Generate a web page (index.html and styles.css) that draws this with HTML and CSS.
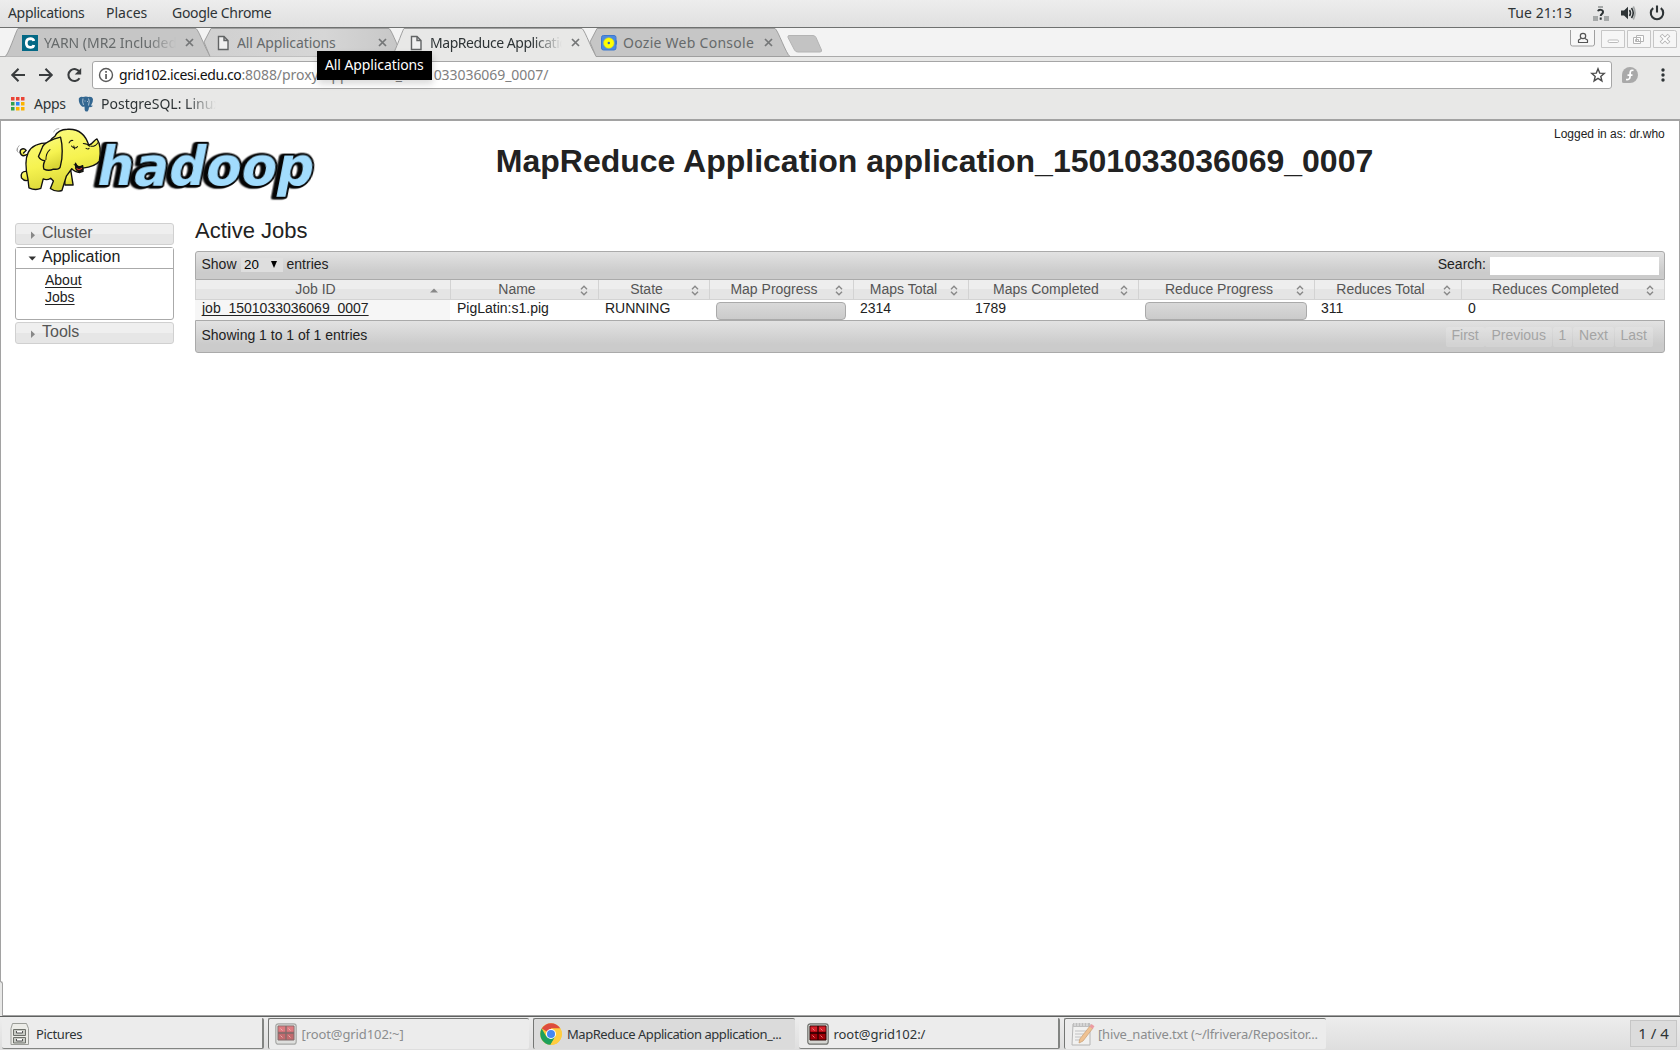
FILE: index.html
```html
<!DOCTYPE html>
<html lang="en">
<head>
<meta charset="utf-8">
<title>MapReduce Application application_1501033036069_0007</title>
<link rel="stylesheet" href="styles.css">
</head>
<body>
<header class="panel">
  <span class="menu menu-apps">Applications</span>
  <span class="menu menu-places">Places</span>
  <span class="menu menu-chrome">Google Chrome</span>
  <span class="clock">Tue 21:13</span>
  <svg class="tray" width="76" height="20" viewBox="0 0 76 20">
    <path d="M1 13h5v5H1zM12 13h5v5h-5zM6 3h5v2H6z" fill="#a5a8a8"/>
    <path d="M6 8.2C6.6 6.300 11 6.300 11 9c0 2-2.300 2-2.300 4M8.700 14.500v2.300" fill="none" stroke="#2e3436" stroke-width="2"/>
    <path d="M29 7.500h3l4-3.800v12.600l-4-3.800h-3z" fill="#2e3436"/>
    <path d="M37.500 7q2 3 0 6M39.500 5q3.500 5 0 10" fill="none" stroke="#2e3436" stroke-width="1.600"/>
    <path d="M41.300 3.500q3.500 6.500 0 13" fill="none" stroke="#a5a8a8" stroke-width="1.600"/>
    <path d="M61.200 5.200a6.200 6.200 0 1 0 7.600 0M65 2.500v7" fill="none" stroke="#2e3436" stroke-width="2.100"/>
  </svg>
</header>

<div class="tabstrip">
  <div class="tab">
    <svg class="tab-shape" width="207" height="29" viewBox="0 0 207 29"><path d="M0 28.500C3 28 11 3 13 .5H191C194 2 202 26 206 28.500" class="shape-idle"/></svg>
    <svg class="fav" width="16" height="16" viewBox="0 0 16 16"><path d="M0 0h16v16H0z" fill="#036885"/><path d="M11.800 6Q11.500 3.600 8.300 3.600 4.300 3.800 4.300 8t4 4.400q3.200 0 3.500-2.400" fill="none" stroke="#fff" stroke-width="2.700"/></svg>
    <span class="tab-title t-yarn">YARN (MR2 Included)</span>
    <svg class="close" width="9" height="9" viewBox="0 0 9 9"><path d="M1 1l7 7M8 1L1 8"/></svg>
  </div>
  <div class="tab">
    <svg class="tab-shape" width="207" height="29" viewBox="0 0 207 29"><defs><linearGradient id="hover"><stop offset="0" stop-color="#d0d0d0"/><stop offset=".6" stop-color="#d6d6d6"/><stop offset="1" stop-color="#c6c6c6"/></linearGradient></defs><path d="M6 14L13 .5H191C194 2 202 26 206 28.500H12Z" fill="url(#hover)"/><path d="M12 28.500L6 14 13 .5H191C194 2 202 26 206 28.500" class="line"/></svg>
    <svg class="fav" width="16" height="16" viewBox="0 0 16 16"><path d="M3.500 1.500h5.500l4 4v9H3.500zM9 1.500v4h4" class="doc"/></svg>
    <span class="tab-title t-all">All Applications</span>
    <svg class="close" width="9" height="9" viewBox="0 0 9 9"><path d="M1 1l7 7M8 1L1 8"/></svg>
  </div>
  <div class="tab">
    <svg class="tab-shape" width="207" height="29" viewBox="0 0 207 29"><path d="M0 29C3 28 11 3 13 .5H191C194 2 202 26 206 29Z" fill="#e8e8e7"/><path d="M0 28.500C3 28 11 3 13 .5H191C194 2 202 26 206 28.500" class="line"/></svg>
    <svg class="fav" width="16" height="16" viewBox="0 0 16 16"><path d="M3.500 1.500h5.500l4 4v9H3.500zM9 1.500v4h4" class="doc"/></svg>
    <span class="tab-title t-mr">MapReduce Application</span>
    <svg class="close" width="9" height="9" viewBox="0 0 9 9"><path d="M1 1l7 7M8 1L1 8"/></svg>
  </div>
  <div class="tab">
    <svg class="tab-shape" width="207" height="29" viewBox="0 0 207 29"><path d="M6 14L13 .5H191C194 2 202 26 206 28.500H12Z" class="shape-idle"/></svg>
    <svg class="fav" width="16" height="16" viewBox="0 0 16 16"><rect x=".5" y=".5" width="14.500" height="14.500" rx="2" fill="#4c8be0" stroke="#3c78d0"/><path d="M14 5.500h2v4h-2z" fill="#3c78d0"/><circle cx="7.800" cy="8" r="5.300" fill="#ff0" stroke="#c8d040" stroke-width=".6"/><circle cx="7.800" cy="8" r="1.200" fill="#3368c0"/></svg>
    <span class="tab-title t-oozie">Oozie Web Console</span>
    <svg class="close" width="9" height="9" viewBox="0 0 9 9"><path d="M1 1l7 7M8 1L1 8"/></svg>
  </div>
  <svg class="newtab" width="36" height="19" viewBox="0 0 36 19"><path d="M2 .5H26Q28 .5 29 2.500L34.500 15Q35 17 33 17H11Q8.500 17 7.500 15L1 2.500Q.5 .5 2 .5Z" fill="#c3c3c3" stroke="#b4b4b4"/></svg>
  <svg class="winbtns" width="108" height="20" viewBox="0 0 108 20" fill="none">
    <path d="M.5 2v14q0 2 2 2h20q2 0 2-2V2" fill="#f7f7f7" stroke="#a0a0a0"/>
    <path d="M8.500 14.500v-2.500l2.500-1.500M17.500 14.500v-2.500l-2.500-1.500M8 14.500h10" stroke="#555" stroke-width="1.200"/><circle cx="13" cy="8" r="2.700" stroke="#555" stroke-width="1.200"/>
    <path d="M31.500 2.500h23v17h-23zM57.500 2.500h23v17h-23zM83.500 2.500h21q2 0 2 2v15h-23z" fill="#f6f6f6" stroke="#c6c6c6"/>
    <rect x="38" y="12" width="10.500" height="2.500" rx="1.200" fill="#fff" stroke="#bbb"/>
    <path d="M66.500 7.500h7v6h-7zM63.500 9.500h7v6h-7zM65.500 11.500h3v2h-3z" fill="#fff" stroke="#b4b4b4"/>
    <path d="M91 7l8 8M99 7l-8 8" stroke="#b4b4b4" stroke-width="3.800"/><path d="M91.500 7.500l7 7M98.500 7.500l-7 7" stroke="#fff" stroke-width="1.800"/>
  </svg>
</div>

<div class="toolbar">
  <svg class="nav" width="82" height="20" viewBox="0 0 82 20" fill="none" stroke="#3a3d3f" stroke-width="2.100"><path d="M15 10H3M8.500 3.700L2.300 10l6.200 6.300M29 10h12M35.500 3.700l6.200 6.300-6.200 6.300M69.500 13.200a6 6 0 1 1 .2-6"/><path d="M71.200 3v6.500h-6.500z" fill="#3a3d3f" stroke="none"/></svg>
  <div class="omnibox">
    <svg width="16" height="16" viewBox="0 0 16 16"><circle cx="8" cy="8" r="6.500" fill="none" stroke="#5a5a5a" stroke-width="1.400"/><path d="M7.200 7h1.700v5H7.200zM7.200 4h1.700v1.800H7.200z" fill="#5a5a5a"/></svg>
    <span class="url"><span class="host">grid102.icesi.edu.co</span><span class="path">:8088/proxy/application_1501033036069_0007/</span></span>
    <svg class="star" width="16" height="16" viewBox="0 0 16 16"><path d="M8 1.800l1.700 4.300 4.600.3-3.500 3 1.100 4.500L8 11.400l-3.900 2.500 1.100-4.500-3.500-3 4.600-.3z" fill="none" stroke="#4c4c4c" stroke-width="1.400"/></svg>
  </div>
  <svg width="16" height="16" viewBox="0 0 16 16"><path d="M8 0a8 8 0 1 1 0 16H1.500Q0 16 0 14.500V8A8 8 0 0 1 8 0z" fill="#a9a9a9"/><path d="M11.500 3.500Q8.500 2.500 8.200 5.500L8 10Q7.800 13 4 12.500M5.500 8.200h5" fill="none" stroke="#fff" stroke-width="1.700"/></svg>
  <svg class="more" width="4" height="14" viewBox="0 0 4 14" fill="#2e3436"><circle cx="2" cy="2" r="1.700"/><circle cx="2" cy="7" r="1.700"/><circle cx="2" cy="12" r="1.700"/></svg>
</div>

<div class="bookmarks">
  <svg class="grid" width="14" height="14" viewBox="0 0 14 14"><path d="M0 0h3.500v3.500H0zM5 0h3.500v3.500H5zM10 0h3.500v3.500H10z" fill="#ea4335"/><path d="M0 5h3.500v3.500H0zM0 10h3.500v3.500H0z" fill="#34a050"/><path d="M5 5h3.500v3.500H5z" fill="#2b83f6"/><path d="M10 5h3.500v3.500H10zM5 10h3.500v3.500H5zM10 10h3.500v3.500H10z" fill="#fbb300"/></svg>
  <span class="bm-apps">Apps</span>
  <svg width="16" height="16" viewBox="0 0 16 16"><path d="M.8 2.500Q2 .2 5 1q3-1 5.500 0 3.500-.8 4.500 2 .3 3-2 6.500l2 .3q-1.500 1.700-4 1.500-.3 3.700-1.500 4.200-2.500.5-2.800-1.500l-.2-3.500q-1.500.8-2.800-.2Q.5 7.500.8 2.500z" fill="#336791"/><path d="M5 2.500Q4 6 5.500 9M10.500 2.500Q12 5 10.500 9.500M6.500 5h1M9 5.500h1" fill="none" stroke="#c9d6e2" stroke-width=".8"/></svg>
  <span class="bm-pg">PostgreSQL: Linux</span>
</div>
<div class="tooltip">All Applications</div>

<main class="page">
  <div class="head">
    <svg class="logo" width="305" height="83" viewBox="45 21 915 249" role="img" aria-label="hadoop">
      <text transform="translate(284 210) skewX(-11)" textLength="650" lengthAdjust="spacingAndGlyphs" class="wordmark">hadoop</text>
      <defs><linearGradient id="skin" x2=".3" y2="1"><stop offset="0" stop-color="#fbfb86"/><stop offset=".6" stop-color="#f6f350"/><stop offset="1" stop-color="#d9d536"/></linearGradient></defs>
      <g transform="translate(-5 -2) scale(1.02)">
      <g stroke="#111" stroke-width="4" stroke-linejoin="round" stroke-linecap="round" fill="url(#skin)">
        <path d="M84 118C70 128 60 115 66 104Q75 98 82 106L74 114"/>
        <path d="M194 178l2 30h24l-7-43z"/>
        <path d="M85 168C70 166 65 175 68 187Q78 200 92 192z"/>
        <path d="M148 84C120 84 98 92 88 112C78 132 80 160 87 190L90 216Q108 225 125 218L132 190Q143 195 154 188L162 196 153 218Q170 230 187 224L200 182 216 160Q225 170 240 171L249 168 248 158Q285 154 297 138C301 115 303 90 290 72C282 74 278 88 266 91C255 55 230 42 203 44C182 44 173 51 166 65Q156 70 148 84z"/>
        <path d="M183 67C160 72 132 85 129 98L118 124Q124 136 137 136Q130 150 134 161Q148 168 162 161Q183 164 183 150C190 125 189 90 183 67z"/>
        <path d="M227 144Q234 160 248 151L249 162Q236 176 228 160z" fill="#151515"/>
        <path d="M231 160Q237 166 245 159" fill="none" stroke="#e83a2f" stroke-width="3"/>
      </g>
      <g stroke="#111" stroke-width="3" fill="none" stroke-linecap="round">
        <path d="M208 84Q212 75 219 77M215 93Q224 104 233 95M222 93l2 9M250 86Q262 86 268 94M258 100Q265 104 267 100M223 148l12 7M152 104Q140 114 140 133M272 94Q286 95 292 84"/>
        <path d="M56 106Q54 98 61 92M58 112Q52 108 55 101M163 52Q165 43 178 42" stroke="#888" stroke-width="2"/>
      </g>
      </g>
    </svg>
    <h1>MapReduce Application application_1501033036069_0007</h1>
    <div class="login">Logged in as: dr.who</div>
  </div>
  <div class="body">
    <nav class="side">
      <h3 class="acc"><svg width="6" height="9" viewBox="0 0 6 9"><path d="M.5 .5L4.500 4.200 .5 8z"/></svg>Cluster</h3>
      <div class="acc-open">
        <h3 class="acc active"><svg width="9" height="6" viewBox="0 0 9 6"><path d="M.5 .5H8L4.300 4.500z"/></svg>Application</h3>
        <ul><li><a>About</a></li><li><a>Jobs</a></li></ul>
      </div>
      <h3 class="acc"><svg width="6" height="9" viewBox="0 0 6 9"><path d="M.5 .5L4.500 4.200 .5 8z"/></svg>Tools</h3>
    </nav>
    <section class="content">
      <h2>Active Jobs</h2>
      <div class="bar top">
        <span>Show</span><span class="select">20<svg width="6" height="7" viewBox="0 0 6 7"><path d="M0 0h6L3 7z"/></svg></span><span>entries</span>
        <span class="search">Search:<span class="input"></span></span>
      </div>
      <div class="row header">
        <div>Job ID<svg class="up" width="8" height="5" viewBox="0 0 8 5"><path d="M0 4.500L4 .5 8 4.500z" fill="#888"/></svg></div>
        <div>Name<svg class="sort" viewBox="0 0 8 11"><path d="M1 4.200l3-3 3 3M1 6.800l3 3 3-3"/></svg></div>
        <div>State<svg class="sort" viewBox="0 0 8 11"><path d="M1 4.200l3-3 3 3M1 6.800l3 3 3-3"/></svg></div>
        <div>Map Progress<svg class="sort" viewBox="0 0 8 11"><path d="M1 4.200l3-3 3 3M1 6.800l3 3 3-3"/></svg></div>
        <div>Maps Total<svg class="sort" viewBox="0 0 8 11"><path d="M1 4.200l3-3 3 3M1 6.800l3 3 3-3"/></svg></div>
        <div>Maps Completed<svg class="sort" viewBox="0 0 8 11"><path d="M1 4.200l3-3 3 3M1 6.800l3 3 3-3"/></svg></div>
        <div>Reduce Progress<svg class="sort" viewBox="0 0 8 11"><path d="M1 4.200l3-3 3 3M1 6.800l3 3 3-3"/></svg></div>
        <div>Reduces Total<svg class="sort" viewBox="0 0 8 11"><path d="M1 4.200l3-3 3 3M1 6.800l3 3 3-3"/></svg></div>
        <div>Reduces Completed<svg class="sort" viewBox="0 0 8 11"><path d="M1 4.200l3-3 3 3M1 6.800l3 3 3-3"/></svg></div>
      </div>
      <div class="row data">
        <div class="sorted"><a>job_1501033036069_0007</a></div>
        <div>PigLatin:s1.pig</div><div>RUNNING</div>
        <div><div class="progress"></div></div>
        <div>2314</div><div>1789</div>
        <div><div class="progress"></div></div>
        <div>311</div><div>0</div>
      </div>
      <div class="bar bottom">
        <span>Showing 1 to 1 of 1 entries</span>
        <div class="pager"><span>First</span><span>Previous</span><span>1</span><span>Next</span><span>Last</span></div>
      </div>
    </section>
  </div>
</main>
<div class="status-stub"></div>

<footer class="taskbar">
  <div class="task raised t-pic">
    <svg width="20" height="24" viewBox="0 0 20 24"><path d="M2.500 1.500h14l2 5v16H1v-16z" fill="#ecece8" stroke="#9b9d98"/><path d="M3.500 7.500h12v6h-12zM3.500 15.500h12v5.500h-12z" fill="#c9ccc6" stroke="#6d706a"/><path d="M6.500 9v2h6V9M6.500 17v2h6v-2" fill="#fff" stroke="#555"/></svg>
    <span>Pictures</span>
  </div>
  <div class="task sunken t-root faded">
    <svg width="22" height="22" viewBox="0 0 22 22"><use href="#term"/></svg>
    <span>[root@grid102:~]</span>
  </div>
  <div class="task sunken current t-app">
    <svg width="22" height="24" viewBox="0 0 22 24"><circle cx="11" cy="12" r="10.800" fill="#fcc934"/><path d="M11 12L1.700 6.600A10.800 10.800 0 0 1 20.400 6.600H11z" fill="#dd4b3e"/><path d="M1.700 6.600A10.800 10.800 0 0 0 10.500 22.800L15.300 14.500 6.300 14.500z" fill="#1da05b"/><path d="M11 6.600h9.400A10.800 10.800 0 0 1 10.500 22.800L15.500 14.500z" fill="#ffcd40"/><circle cx="11" cy="12" r="5" fill="#fff"/><circle cx="11" cy="12" r="4" fill="#4587f3"/></svg>
    <span>MapReduce Application application_...</span>
  </div>
  <div class="task raised t-root2">
    <svg width="22" height="22" viewBox="0 0 22 22"><g id="term"><rect x=".8" y=".8" width="20.400" height="20.400" rx="2.500" fill="#d4d5d1" stroke="#6f716d" stroke-width="1.200"/><path d="M3 3h16v14H3z" fill="#a00008" stroke="#2b0000"/><path d="M3.500 3.500h15v5h-15z" fill="#d4202a"/><path d="M11 3v14M3 10h16" stroke="#240000" stroke-width="1.300"/><path d="M5.500 5.500l2 2M13.500 5.500l2 2M5.500 12.500l2 2M13.500 12.500l2 2" stroke="#ee8c8c" stroke-width=".9"/></g></svg>
    <span>root@grid102:/</span>
  </div>
  <div class="task sunken t-hive faded">
    <svg width="24" height="26" viewBox="0 0 24 26"><path d="M2 3h17v21H1z" fill="#f6f6f4" stroke="#888"/><path d="M2 2h17v4H2z" fill="#999"/><path d="M4 0v5M7 0v5M10 0v5M13 0v5M16 0v5" stroke="#eee"/><path d="M4 10h11M4 13h9M4 16h6M4 19h5" stroke="#a0a0a0"/><path d="M19 5l3 2L12 20l-4 2 .8-4z" fill="#f2a04a" stroke="#b26a1f" stroke-width=".8"/><path d="M18.500 5.500L20.500 3l3 2.300L21.500 8z" fill="#ec5a67"/></svg>
    <span>[hive_native.txt (~/lfrivera/Repositor...</span>
  </div>
  <div class="workspace">1 / 4</div>
</footer>
</body>
</html>
```
FILE: styles.css
```css
* { box-sizing: border-box; }
html, body { height: 100%; }
body {
  margin: 0; width: 1680px; height: 1050px; overflow: hidden; position: relative;
  display: flex; flex-direction: column; background: #e8e8e7; color: #2e3436;
  font: 14px/18px "Noto Sans", sans-serif; white-space: nowrap;
}
svg { display: block; flex: none; }
h1, h2, h3, ul { margin: 0; padding: 0; font-weight: normal; }

.panel {
  height: 28px; flex: none; display: flex; align-items: center; padding: 0 15px 2px 8px;
  background: linear-gradient(#ededed, #e0e0e0); border-bottom: 1px solid #6f7170;
}
.menu-apps { width: 98px; letter-spacing: -.33px; }
.menu-places { width: 66px; }
.menu-chrome { letter-spacing: -.3px; }
.clock { margin-left: auto; margin-right: 20px; letter-spacing: .1px; }
.tray { margin-right: -3px; }

.tabstrip {
  height: 29px; flex: none; display: flex; align-items: flex-start; padding-left: 6px;
  background: #f3f3f3; box-shadow: inset 0 -1px #aaa;
}
.tab { position: relative; width: 193px; height: 29px; display: flex; align-items: center; padding-left: 16px; color: #666a6b; }
.tab > * { position: relative; }
.tab .tab-shape { position: absolute; left: -1px; top: 0; }
.shape-idle { fill: #c6c6c6; stroke: #9f9f9f; }
.line { fill: none; stroke: #9f9f9f; }
.doc { fill: #f0f0f0; stroke: #626465; stroke-width: 1.4; }
.tab-title { margin-left: 6px; width: 134px; overflow: hidden; }
.t-yarn, .t-mr {
  -webkit-mask-image: linear-gradient(90deg, #000 103px, transparent 132px);
  mask-image: linear-gradient(90deg, #000 103px, transparent 132px);
}
.t-yarn { letter-spacing: -.04px; }
.t-all { letter-spacing: -.1px; }
.t-mr { letter-spacing: -.45px; color: #2e3436; }
.t-oozie { letter-spacing: .27px; }
.close { margin-left: 6.5px; fill: none; stroke: #747677; stroke-width: 1.7; }
.newtab { margin: 7px 0 0 9px; }
.winbtns { margin: 0 2px 0 auto; width: 108px; }

.toolbar { height: 34px; flex: none; display: flex; align-items: center; padding: 0 15px 0 10px; }
.toolbar > svg { margin-top: 2px; }
.omnibox {
  width: 1520px; height: 28px; margin-top: 2px; display: flex; align-items: center; gap: 5px;
  background: #fff; border: 1px solid #a6a6a6; border-radius: 3px; padding: 0 5px 0 5px; margin-right: 10px;
}
.url { flex: 1; }
.host { color: #111; letter-spacing: -.42px; }
.path { color: #808080; letter-spacing: -.06px; }
.more { margin-left: auto; }

.bookmarks { height: 28px; flex: none; display: flex; align-items: center; padding: 0 0 2px 11px; }
.bm-apps { margin-left: 9px; width: 44px; letter-spacing: -.3px; }
.bm-pg {
  margin-left: 7px; width: 115px; overflow: hidden;
  -webkit-mask-image: linear-gradient(90deg, #000 85px, transparent 115px);
  mask-image: linear-gradient(90deg, #000 85px, transparent 115px);
}
.tooltip {
  position: absolute; left: 317px; top: 51px; width: 115px; height: 29px; padding-left: 8px;
  background: #000; color: #fff; line-height: 27px; letter-spacing: -.1px; box-shadow: 1px 4px 7px rgba(0,0,0,.15);
}

.page {
  flex: 1; background: #fff; color: #222; border: 1px solid #a2a2a2; border-top-width: 2px;
  font-family: "Liberation Sans", Arial, sans-serif; line-height: 16px;
}
.head { height: 102px; display: flex; padding: 1px 14px 0; }
.wordmark {
  font: bold 160px "DejaVu Sans", sans-serif; fill: #a2dcfd; stroke: #050505; stroke-width: 12;
  stroke-linejoin: round; paint-order: stroke;
  filter: drop-shadow(-5px 1px 0 #050505) drop-shadow(-5px 1px 0 #050505);
}
h1 { flex: 1; text-align: center; font-size: 32px; font-weight: bold; line-height: 36px; padding: 21px 15px 0 0; }
.login { width: 111px; margin: 4px 0 0 -10px; font-size: 12px; line-height: 16px; }
.body { display: flex; padding: 0 14px; }
.side { width: 159px; margin-right: 21px; }
.acc {
  height: 22px; display: flex; align-items: center; border: 1px solid #d0d0d0; border-radius: 3px;
  background: linear-gradient(#efefef 50%, #e6e6e6 50%); color: #555; font-size: 16px; padding: 0 0 3px 13px;
}
.acc svg { width: 9px; margin-right: 4px; margin-top: 5px; fill: #888; }
.acc-open { margin: 2px 0; height: 73px; border: 1px solid #aaa; border-radius: 3px; }
.acc.active { height: 21px; background: #fff; color: #212121; border: 0; border-bottom: 1px solid #aaa; border-radius: 0; padding: 0 0 3px 12px; }
.acc.active svg { fill: #333; margin: 5px 5px 0 0; }
ul { list-style: none; padding: 3px 0 0 29px; line-height: 17.3px; }
a { text-decoration: underline; text-underline-offset: 2px; text-decoration-thickness: 1px; text-decoration-skip-ink: none; }

.content { flex: 1; }
h2 { font-size: 22px; line-height: 24px; height: 32px; margin-top: -4px; }
.bar { display: flex; background: linear-gradient(#e2e2e2, #cbcbcb 75%); border: 1px solid #aaa; padding: 0 5px; }
.bar.top { height: 29px; border-radius: 3px 3px 0 0; align-items: flex-start; padding: 4px 5px 0 5.5px; gap: 4px; }
.select {
  display: flex; align-items: center; width: 42px; height: 14px; margin-top: 2px; padding-left: 3.5px; background: #dedede;
  font-size: 13.33px; line-height: 14px; color: #000;
}
.select svg { margin: -2px 0 0 12px; }
.search { margin-left: auto; display: flex; gap: 4px; }
.input { width: 169px; height: 18px; margin-top: 1px; background: #fff; }
.row { display: grid; grid-template-columns: 255px 148px 111px 144px 115px 170px 176px 147px 1fr; }
.header { height: 20px; background: linear-gradient(#eee 50%, #e5e5e5 50%); border-bottom: 1px solid #d3d3d3; border-right: 1px solid #d3d3d3; color: #555; }
.header > div { position: relative; text-align: center; border-left: 1px solid #d3d3d3; padding: 1px 15px 0 0; line-height: 17px; }
.header svg { position: absolute; right: 10.5px; }
.header .up { top: 8px; right: 12px; }
.sort { width: 8px; height: 11px; top: 5px; fill: none; stroke: #888; stroke-width: 1.4; }
.data { height: 20px; }
.data > div { padding: 0 7px; line-height: 17px; }
.sorted { background: #f6f6f6; }
.progress { margin-top: 2px; height: 18px; border: 1px solid #aaa; border-radius: 4px; background: linear-gradient(#d9d9d9, #cbcbcb); }
.bar.bottom { height: 33px; border-radius: 0 0 3px 3px; padding: 6px 11px 0 5.5px; justify-content: space-between; }
.pager { display: flex; gap: .7px; height: 20px; color: #a4a4a4; }
.pager span { padding: 0 6px; line-height: 17px; background: rgba(255,255,255,.16); border-radius: 2px; }

.status-stub { position: absolute; left: 0; top: 981px; width: 3px; height: 35px; background: #e8e8e7; border: solid #a2a2a2; border-width: 1px 1px 0 0; border-radius: 0 3px 0 0; }

.taskbar {
  height: 34px; flex: none; display: flex; gap: 4px; padding: 1px 3px 0 2px; position: relative;
  background: linear-gradient(#ededed, #dedede); border-top: 1px solid #5f6160; font-size: 13px;
}
.task { width: 261.5px; height: 31px; display: flex; align-items: center; gap: 7px; padding: 1px 0 0 8px; background: #ececec; border-radius: 2px; }
.raised { border: 1px solid #828482; border-width: 0 2px 1px 0; }
.sunken { border: 1px solid #747674; border-width: 1px 0 0 1px; padding: 0 0 0 6px; }
.current { background: #dbdbdb; }
.faded { color: #8b8d8e; }
.faded svg { opacity: .55; }
.t-pic { letter-spacing: -.35px; gap: 6px; }
.t-root { letter-spacing: -.1px; gap: 5px; }
.t-app { letter-spacing: -.45px; gap: 5px; }
.t-root2 { letter-spacing: -.05px; gap: 5px; }
.t-hive { letter-spacing: -.17px; gap: 3px; }
.workspace { margin: 2px 0 0 auto; width: 47px; height: 27px; border: 1px solid #c6c6c6; background: #dcdcdc; text-align: center; font-size: 15px; line-height: 24px; }
```
